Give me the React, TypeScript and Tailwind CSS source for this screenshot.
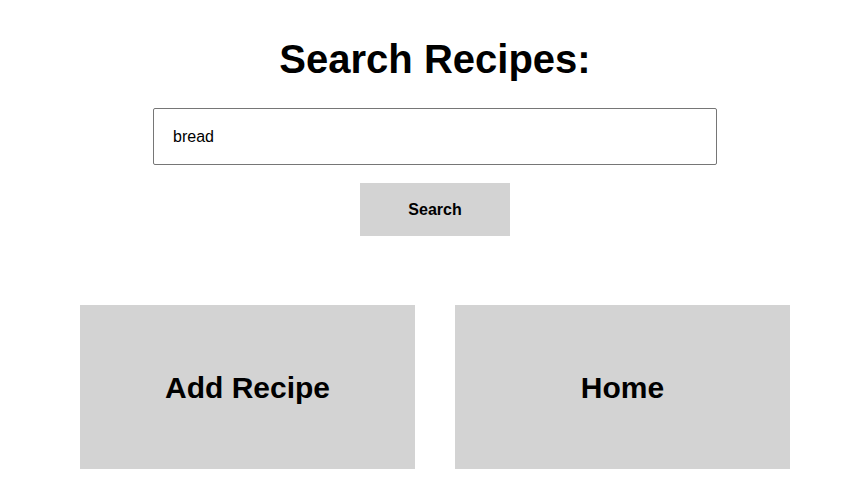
import React, { useState } from 'react';

export default function App() {
  const [query, setQuery] = useState('bread');

  return (
    <div className="min-h-[485px] bg-white text-black font-['Liberation_Sans',Arial,sans-serif]">
      <div className="ml-[80px] w-[710px] flex flex-col items-center pt-[36px]">
        <h1 className="text-[40px] leading-[46px] font-bold">Search Recipes:</h1>

        <input
          value={query}
          onChange={(e) => setQuery(e.target.value)}
          className="mt-[26px] w-[564px] h-[57px] border border-[#767676] rounded-[2px] pl-[19px] text-[16px] outline-none"
        />

        <button className="mt-[18px] w-[150px] h-[53px] bg-[#d3d3d3] text-[16px] font-bold">
          Search
        </button>

        {/* nav cards */}
        <div className="mt-[69px] w-full grid grid-cols-2 gap-[40px]">
          <a className="h-[164px] bg-[#d3d3d3] flex items-center justify-center text-[30px] font-bold">
            Add Recipe
          </a>
          <a className="h-[164px] bg-[#d3d3d3] flex items-center justify-center text-[30px] font-bold">
            Home
          </a>
        </div>
      </div>
    </div>
  );
}
